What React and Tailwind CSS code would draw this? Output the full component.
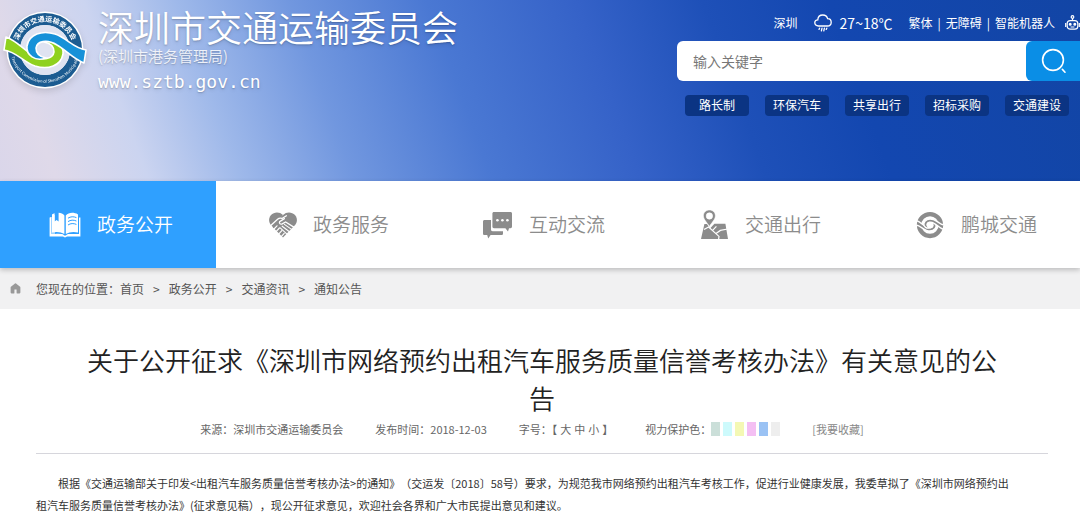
import React, { useState } from 'react';
import { GoHomeFill } from 'react-icons/go';

const BookIcon = () => (
    <svg width="32" height="26" viewBox="0 0 32 26" fill="currentColor" aria-hidden="true">
        <path d="M3 3 H6 V22 C10 21 13 22 15.4 23.4 H1 V5 H3 Z" opacity=".55" />
        <path d="M3 2.5 C4 1.6 4.6 1.4 5.6 1.2 V9.6 L7.6 8 L9.6 9.6 V.8 C12 .8 14 1.8 15.4 3.4 V22 C12 19.8 7.6 19.4 3 20.4 Z" />
        <path d="M16.8 3.4 C19.6 .4 24.6 0 29 2.4 V20.4 C24.6 19.4 20.2 19.8 16.8 22 Z" />
        <path d="M.6 5.4 H2 V22 H13 L16 23.8 L19 22 H30 V5.4 H31.4 V24.6 H18 L16 25.6 L14 24.6 H.6 Z" />
        <g stroke="#2fa0ff" strokeWidth="1" fill="none">
            <path d="M19 6.2 C21.6 4.4 24.6 4.4 27.4 5.6" />
            <path d="M19 9.6 C21.6 7.8 24.6 7.8 27.4 9" />
            <path d="M19 13 C21.6 11.2 24.6 11.2 27.4 12.4" />
        </g>
    </svg>
)

const HeartIcon = () => (
    <svg width="28" height="26" viewBox="0 0 28 26" fill="currentColor" aria-hidden="true">
        <path d="M14 3 C10.5 -.6 5 -.2 2 3 C-.8 6.4 -.4 10.6 2.4 13.6 L5 16.2 L10 9 L14 3 Z" />
        <path d="M14 3 C17.5 -.6 23 -.2 26 3 C28.8 6.4 28.4 10.6 25.6 13.6 L14 25.6 L3.6 15 L10 7.4 Z" />
        <g stroke="#fff" strokeLinecap="round" fill="none">
            <path strokeWidth="1.3" d="M1.2 14 L8.6 7.2 C10.4 5.6 12 6.2 13.4 6.4 L17.4 3.8" />
            <path strokeWidth="1.3" d="M15.4 6.6 L10.6 9.8 C9.8 11.6 11.6 12.6 13.2 11.8 L16.6 10 L25.6 15.6" />
            <path strokeWidth="1.1" d="M15.4 12.4 L22.6 17.4 M13.2 14.2 L20.4 19.8 M11.2 15.8 L18 22.2" />
            <path strokeWidth="1.2" d="M4 18 L8 13.8 M6.6 20.2 L10.4 16 M9.2 22.6 L12.8 18.6 M12 24.8 L15.2 21.4" />
        </g>
    </svg>
)

const ChatIcon = () => (
    <svg width="30" height="28" viewBox="0 0 30 28" fill="currentColor" aria-hidden="true">
        <path d="M1.6 9 H8 V18.6 C8 19.6 8.6 20.2 9.6 20.2 H20 V22.4 C20 23.4 19.4 24 18.4 24 H7.6 L5.2 27.6 L4.2 24 H1.6 C.6 24 0 23.4 0 22.4 V10.6 C0 9.6 .6 9 1.6 9 Z" />
        <path d="M11 1 H27.4 C28.4 1 29 1.6 29 2.6 V15.6 C29 16.6 28.4 17.2 27.4 17.2 H26 L25 20.4 L22.4 17.2 H11 C10 17.2 9.4 16.6 9.4 15.6 V2.6 C9.4 1.6 10 1 11 1 Z" />
        <g fill="#fff">
            <circle cx="14.4" cy="9.2" r="1.3" />
            <circle cx="19.4" cy="9.2" r="1.3" />
            <circle cx="24.4" cy="9.2" r="1.3" />
        </g>
    </svg>
)

const MapIcon = () => (
    <svg width="28" height="30" viewBox="0 0 28 30" fill="currentColor" aria-hidden="true">
        <path d="M3.4 14 H6 L9 18.6 L13.4 13.8 H24.4 L27 29 H0 Z" />
        <path fillRule="evenodd" stroke="#fff" strokeWidth=".6" d="M8.4 0 C12 0 14.4 2.6 14.4 5.8 C14.4 9.4 11 12.2 8.4 16.4 C5.8 12.2 2.4 9.4 2.4 5.8 C2.4 2.6 4.8 0 8.4 0 Z M8.4 2.8 A3.2 3.2 0 1 0 8.4 9.2 A3.2 3.2 0 1 0 8.4 2.8 Z" />
        <g stroke="#fff" strokeWidth="1.2" fill="none">
            <path d="M3 19.6 L7.6 17 L18 26.4 L17.6 29.4" />
            <path d="M11.6 20.4 L15.4 16.4" />
            <path d="M15 23.6 L19.4 20.4 L26.6 19" />
        </g>
    </svg>
)

const SWOOSH = 'M6 37 C17 41 24 50 33 55 C43 61 53 59 54 52 C54 46 50 43 44 42 C55 38 64 45 63 54 C61 66 48 70 35 66 C23 62 17 52 4 50 Z'

const SwirlIcon = () => (
    <svg width="30" height="28" viewBox="1 10 88 80" aria-hidden="true">
        <circle cx="45" cy="50" r="32" fill="none" stroke="currentColor" strokeWidth="13" />
        <g fill="currentColor" stroke="#fff" strokeWidth="4">
            <path d={SWOOSH} />
            <path d={SWOOSH} transform="rotate(180 45 50)" />
        </g>
    </svg>
)

const Emblem = () => (
    <svg width="90" height="84" viewBox="0 8 90 84" className="drop-shadow-md" aria-hidden="true">
        <defs>
            <path id="ringTop" d="M16.5 50 A28.5 28.5 0 0 1 73.5 50" />
            <path id="ringBottom" d="M11 56 A35 35 0 0 0 79 56" />
        </defs>
        <circle cx="45" cy="50" r="38.5" fill="#fff" />
        <circle cx="45" cy="50" r="31" fill="none" stroke="#1c5c91" strokeWidth="12" />
        <circle cx="45" cy="50" r="25" fill="#dfe3f1" />
        <text fontSize="7" fontWeight="700" fill="#fff" textAnchor="middle">
            <textPath href="#ringTop" startOffset="50%">深圳市交通运输委员会</textPath>
        </text>
        <text fontSize="4" fill="#fff" textAnchor="middle">
            <textPath href="#ringBottom" startOffset="50%">Transport Commission of Shenzhen Municipality</textPath>
        </text>
        <g stroke="#fff" strokeWidth="1.6" strokeLinejoin="round">
            <path d={SWOOSH} fill="#8fd11f" />
            <path d={SWOOSH} fill="#1691d8" transform="rotate(180 45 50)" />
        </g>
    </svg>
)

const RainIcon = () => (
    <svg width="18" height="18" viewBox="0 0 18 18" fill="none" stroke="currentColor" strokeWidth="1.3" strokeLinecap="round" aria-hidden="true">
        <path d="M4.4 12 C2.2 12 .8 10.6 .8 8.8 C.8 7 2.2 5.8 3.8 5.8 C4 3 6 1 8.8 1 C11.2 1 13 2.4 13.6 4.6 C15.8 4.6 17.2 6.2 17.2 8.2 C17.2 10.4 15.6 12 13.4 12 Z" />
        <path d="M5.6 14.2 L5 15.4 M8 14.2 L7.4 16.8 M10.4 14.2 L9.8 16.8 M12.8 14.2 L12.2 15.4" />
    </svg>
)

const RobotIcon = () => (
    <svg width="15" height="16" viewBox="0 0 15 16" fill="none" stroke="currentColor" strokeWidth="1.2" aria-hidden="true">
        <circle cx="7.5" cy="2" r="1.3" />
        <path d="M7.5 3.4 V5.6" />
        <rect x="2.2" y="5.6" width="10.6" height="8.6" rx="3" />
        <path d="M.7 8 V12 M14.3 8 V12 M5.6 12 H9.4" />
        <circle cx="5.2" cy="9.2" r=".9" fill="currentColor" />
        <circle cx="9.8" cy="9.2" r=".9" fill="currentColor" />
    </svg>
)

const tags = ['路长制', '环保汽车', '共享出行', '招标采购', '交通建设']

const navItems = [
    { name: '政务公开', icon: <BookIcon /> },
    { name: '政务服务', icon: <HeartIcon /> },
    { name: '互动交流', icon: <ChatIcon /> },
    { name: '交通出行', icon: <MapIcon /> },
    { name: '鹏城交通', icon: <SwirlIcon /> },
]

const crumbs = ['首页', '政务公开', '交通资讯', '通知公告']

const eyeColors = [
    { name: '灰绿', color: 'bg-[#cbdfd9]' },
    { name: '浅青', color: 'bg-[#cdfafc]' },
    { name: '浅黄', color: 'bg-[#f4f8b4]' },
    { name: '浅紫', color: 'bg-[#f4bff3]' },
    { name: '浅蓝', color: 'bg-[#9ac2f4]' },
    { name: '浅灰', color: 'bg-[#eeeeee]' },
]

const Header = () => {
    const [keyword, setKeyword] = useState('')

    return (
        <header className="flex min-h-[181px] items-start justify-between bg-[linear-gradient(70deg,#dad6ea_0%,#dfd9e9_5%,#cbd4f0_13%,#9fb9ea_21%,#7197df_31%,#4a78d3_43%,#3562c8_56%,#1e50b8_67%,#1347b0_78%,#1245a5_100%)]">
            <div className="flex pt-2 text-white">
                <Emblem />
                <div className="pl-2 text-shadow-md">
                    <p className="text-[36px] font-[350] leading-9">深圳市交通运输委员会</p>
                    <p className="text-[15px] font-[350] leading-6 text-white/85">(深圳市港务管理局)</p>
                    <p className="font-['DejaVu_Sans_Mono',monospace] text-lg leading-7">www.sztb.gov.cn</p>
                </div>
            </div>

            <div className="w-[403px] pt-3">
                {/* weather and links */}
                <div className="flex h-[22px] items-center justify-end text-xs text-white">
                    <span>深圳</span>
                    <span className="pl-4"><RainIcon /></span>
                    <span className="pl-2 pr-4 text-sm">27~18℃</span>
                    <a href="#">繁体</a>
                    <span className="px-[5px]">|</span>
                    <a href="#">无障碍</a>
                    <span className="px-[5px]">|</span>
                    <a href="#">智能机器人</a>
                    <span className="pl-2.5"><RobotIcon /></span>
                </div>

                {/* search */}
                <form onSubmit={(e) => e.preventDefault()} className="mt-[7px] flex h-10 overflow-hidden rounded-l-md bg-white">
                    <input
                        type="text"
                        aria-label="输入关键字"
                        placeholder="输入关键字"
                        value={keyword}
                        onChange={(e) => setKeyword(e.target.value)}
                        className="min-w-0 flex-1 px-4 text-sm text-gray-700 outline-none placeholder:text-[#777]"
                    />
                    <button type="submit" aria-label="搜索" className="flex w-[54px] items-center justify-center rounded-l-md bg-[#0a8ee6] text-white">
                        <svg width="26" height="26" viewBox="0 0 26 26" fill="none" stroke="currentColor" strokeWidth="1.6" strokeLinecap="round">
                            <circle cx="13" cy="12" r="10.4" />
                            <path d="M22.4 21.4 L25 24.2" />
                        </svg>
                    </button>
                </form>

                <div className="mt-3.5 flex gap-4 px-2">
                    {tags.map((tag) => (
                        <a key={tag} href="#" className="h-[21px] w-16 rounded bg-[#0b3483] text-center text-xs leading-5 text-white">
                            {tag}
                        </a>
                    ))}
                </div>
            </div>
        </header>
    )
}

const App = () => {
    return (
        <div className="min-h-screen bg-white font-['Noto_Sans_CJK_SC',sans-serif] text-[#333]">
            <Header />

            <nav className="relative shadow-[0_2px_5px_rgba(0,0,0,0.22)]">
                <ul className="grid grid-cols-5">
                    {navItems.map((item, i) => (
                        <li key={item.name}>
                            <a
                                href="#"
                                className={`flex h-[87px] items-center gap-4 pl-[49px] text-[19px] font-[350] ${i === 0 ? 'bg-[#2fa0ff] text-white' : 'bg-white text-[#8c8c8c]'}`}
                            >
                                <span className="flex w-8 justify-end">{item.icon}</span>
                                {item.name}
                            </a>
                        </li>
                    ))}
                </ul>
            </nav>

            <div className="flex h-[41px] items-center bg-[#f1f1f2] pl-[9px] text-xs text-[#555]">
                <GoHomeFill size={13} className="text-[#999]" />
                <span className="pl-3.5">您现在的位置：</span>
                {crumbs.map((crumb, i) => (
                    <React.Fragment key={crumb}>
                        {i > 0 && <span className="px-[9px]">&gt;</span>}
                        <a href="#">{crumb}</a>
                    </React.Fragment>
                ))}
            </div>

            <main className="pl-9 pr-8 pt-8">
                <h1 className="px-11 text-center text-[26px] font-[350] leading-[38px] text-[#222]">
                    关于公开征求《深圳市网络预约出租汽车服务质量信誉考核办法》有关意见的公告
                </h1>

                <div className="flex items-center justify-center gap-8 border-b border-[#d6d6dc] pb-4 pr-5 pt-1 text-[11px] leading-4 text-[#666]">
                    <span>来源：深圳市交通运输委员会</span>
                    <span>发布时间：2018-12-03</span>
                    <span className="flex gap-[3px]">
                        字号：【
                        <button type="button">大</button>
                        <button type="button">中</button>
                        <button type="button">小</button>
                        】
                    </span>
                    <span className="flex items-center">
                        视力保护色：
                        <span className="flex gap-[3px]">
                            {eyeColors.map((c) => (
                                <button key={c.name} type="button" aria-label={c.name} className={`h-3.5 w-[9px] ${c.color}`} />
                            ))}
                        </span>
                    </span>
                    <a href="#" className="text-[#888]">[我要收藏]</a>
                </div>

                <p className="pr-8 pt-[18px] indent-[22px] text-[11px] leading-[22px] text-[#333] [text-spacing-trim:space-all]">
                    根据《交通运输部关于印发&lt;出租汽车服务质量信誉考核办法&gt;的通知》（交运发〔2018〕58号）要求，为规范我市网络预约出租汽车考核工作，促进行业健康发展，我委草拟了《深圳市网络预约出租汽车服务质量信誉考核办法》(征求意见稿），现公开征求意见，欢迎社会各界和广大市民提出意见和建议。
                </p>
            </main>
        </div>
    );
};

export default App;
